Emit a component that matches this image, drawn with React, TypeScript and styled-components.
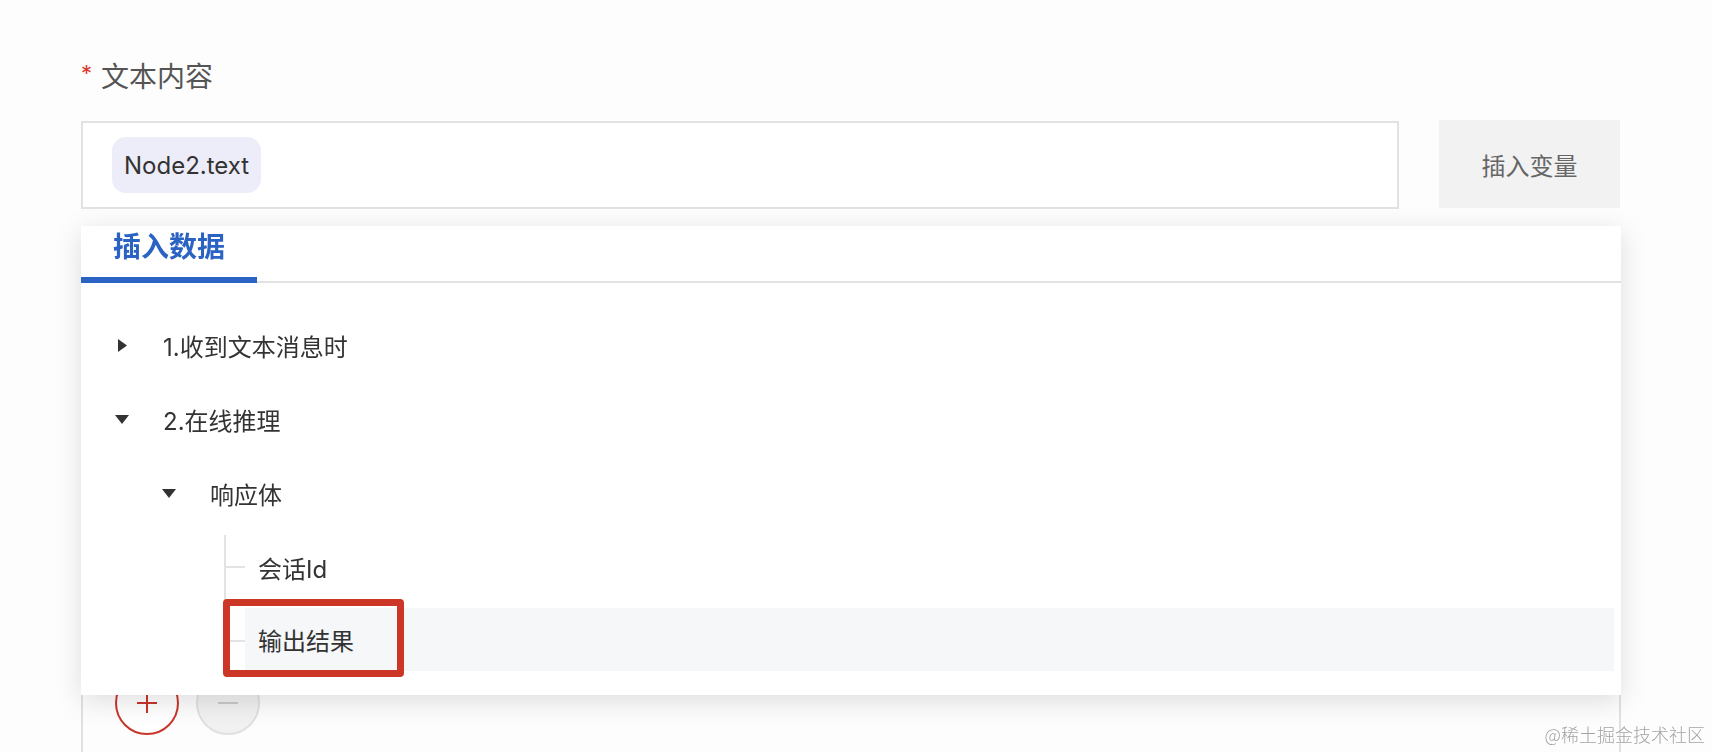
import React from "react";
import styled, { createGlobalStyle } from "styled-components";

const GlobalStyle = createGlobalStyle`
  html, body {
    margin: 0;
    padding: 0;
    height: 752px;
    overflow: hidden;
    background: #fdfdfd;
  }
  body {
    font-family: Inter, "Noto Sans CJK SC", sans-serif;
    color: #333;
  }
  * {
    box-sizing: border-box;
  }
`;

type NodeKind = "open" | "closed" | "leaf";

type TreeNode = {
  id: number;
  label: string;
  level: number;
  kind: NodeKind;
  last?: boolean;
  active?: boolean;
};

const nodes: TreeNode[] = [
  { id: 1, label: "1.收到文本消息时", level: 0, kind: "closed" },
  { id: 2, label: "2.在线推理", level: 0, kind: "open" },
  { id: 3, label: "响应体", level: 1, kind: "open" },
  { id: 4, label: "会话Id", level: 2, kind: "leaf" },
  { id: 5, label: "输出结果", level: 2, kind: "leaf", last: true, active: true },
];

export default function App() {
  return (
    <>
      <GlobalStyle />
      <Page>
        <FieldLabel>
          <span className="required">*</span>文本内容
        </FieldLabel>
        <InputRow>
          <TextBox>
            <VarChip>Node2.text</VarChip>
          </TextBox>
          <InsertButton>插入变量</InsertButton>

          <Dropdown>
            <TabBar>
              <Tab>插入数据</Tab>
            </TabBar>
            <Tree>
              {nodes.map((n) => (
                <TreeRow key={n.id} $level={n.level}>
                  {n.kind === "leaf" ? (
                    <Connector $last={!!n.last} />
                  ) : (
                    <Switcher>
                      {n.kind === "closed" ? (
                        <svg width="9" height="13" viewBox="0 0 9 13">
                          <polygon points="0,0 9,6.5 0,13" fill="#333" />
                        </svg>
                      ) : (
                        <svg width="14" height="9" viewBox="0 0 14 9">
                          <polygon points="0,0 14,0 7,9" fill="#333" />
                        </svg>
                      )}
                    </Switcher>
                  )}
                  <NodeTitle $leaf={n.kind === "leaf"} $active={!!n.active}>
                    {n.label}
                  </NodeTitle>
                  {n.active && <Highlight />}
                </TreeRow>
              ))}
            </Tree>
          </Dropdown>
        </InputRow>

        <ListBox>
          <RoundButton $variant="add">
            <svg width="22" height="22" viewBox="0 0 22 22">
              <path d="M11 1v20M1 11h20" stroke="#c8352a" strokeWidth="2" />
            </svg>
          </RoundButton>
          <RoundButton $variant="remove">
            <svg width="22" height="22" viewBox="0 0 22 22">
              <path d="M1 11h20" stroke="#c9c9c9" strokeWidth="2" />
            </svg>
          </RoundButton>
        </ListBox>
      </Page>
      <Watermark>@稀土掘金技术社区</Watermark>
    </>
  );
}

const Page = styled.div`
  width: 1620px;
  padding: 56px 0 0 81px;
`;

const FieldLabel = styled.div`
  display: flex;
  align-items: center;
  height: 38px;
  font-size: 28px;
  color: #555;
  .required {
    color: #d7392c;
    font-size: 22px;
    margin-right: 9px;
    position: relative;
    top: -2px;
  }
`;

const InputRow = styled.div`
  position: relative;
  display: flex;
  margin-top: 26px;
  width: 1539px;
`;

const TextBox = styled.div`
  display: flex;
  align-items: center;
  width: 1318px;
  height: 88px;
  margin-top: 1px;
  padding-left: 29px;
  background: #fff;
  border: 2px solid #e2e2e2;
`;

const VarChip = styled.span`
  display: inline-flex;
  align-items: center;
  height: 56px;
  padding: 0 12px;
  border-radius: 14px;
  background: #ededf9;
  color: #333;
  font-size: 24px;
`;

const InsertButton = styled.div`
  display: flex;
  align-items: center;
  justify-content: center;
  width: 181px;
  height: 88px;
  margin-left: 40px;
  background: #f2f2f2;
  color: #666;
  font-size: 24px;
`;

const Dropdown = styled.div`
  position: absolute;
  top: calc(100% + 17px);
  left: 0;
  width: 1540px;
  height: 469px;
  background: #fff;
  box-shadow: 0 6px 26px rgba(0, 0, 0, 0.13);
  z-index: 10;
`;

const TabBar = styled.div`
  display: flex;
  height: 57px;
  border-bottom: 2px solid #e2e2e2;
`;

const Tab = styled.div`
  position: relative;
  width: 176px;
  padding: 2px 0 0 32px;
  line-height: 38px;
  font-size: 28px;
  font-weight: 700;
  color: #2a63c3;
  &::after {
    content: "";
    position: absolute;
    left: 0;
    right: 0;
    bottom: -2px;
    height: 6px;
    background: #2a63c3;
  }
`;

const Tree = styled.div`
  padding-top: 25px;
`;

const TreeRow = styled.div<{ $level: number }>`
  position: relative;
  display: flex;
  align-items: center;
  height: 74px;
  padding-left: ${(p) => 21 + p.$level * 47}px;
  font-size: 24px;
  color: #333;
`;

const Switcher = styled.div`
  display: flex;
  align-items: center;
  justify-content: center;
  width: 40px;
  margin-right: 21px;
`;

const Connector = styled.div<{ $last: boolean }>`
  position: relative;
  align-self: stretch;
  width: 49px;
  &::before {
    content: "";
    position: absolute;
    left: 28px;
    top: 5px;
    width: 2px;
    height: ${(p) => (p.$last ? "32px" : "69px")};
    background: #e3e3e3;
  }
  &::after {
    content: "";
    position: absolute;
    left: 28px;
    top: 36px;
    width: 21px;
    height: 2px;
    background: #e3e3e3;
  }
`;

const NodeTitle = styled.div<{ $leaf: boolean; $active: boolean }>`
  display: flex;
  align-items: center;
  height: 63px;
  padding-left: ${(p) => (p.$leaf ? "13px" : "0")};
  margin-top: ${(p) => (p.$active ? "-4px" : "0")};
  flex: ${(p) => (p.$active ? 1 : "none")};
  margin-right: 7px;
  background: ${(p) => (p.$active ? "#f6f7f9" : "transparent")};
`;

const Highlight = styled.div`
  position: absolute;
  left: 142px;
  top: -5px;
  width: 181px;
  height: 78px;
  border: 7px solid #cb3626;
  border-radius: 4px;
  pointer-events: none;
`;

const ListBox = styled.div`
  display: flex;
  gap: 17px;
  width: 1540px;
  height: 600px;
  margin-top: 20px;
  padding: 442px 0 0 32px;
  border-left: 2px solid #e1e1e1;
  border-right: 2px solid #e1e1e1;
`;

const RoundButton = styled.div<{ $variant: "add" | "remove" }>`
  display: flex;
  align-items: center;
  justify-content: center;
  width: 64px;
  height: 64px;
  border-radius: 50%;
  border: 2px solid ${(p) => (p.$variant === "add" ? "#c8352a" : "#e0e0e0")};
  background: ${(p) => (p.$variant === "add" ? "#fff" : "#f1f1f1")};
`;

const Watermark = styled.div`
  position: fixed;
  right: 7px;
  bottom: 5px;
  font-family: "Noto Sans CJK SC", sans-serif;
  font-size: 18px;
  font-weight: 300;
  color: #a3a3a3;
  text-shadow: 0 0 2px #fff;
`;
